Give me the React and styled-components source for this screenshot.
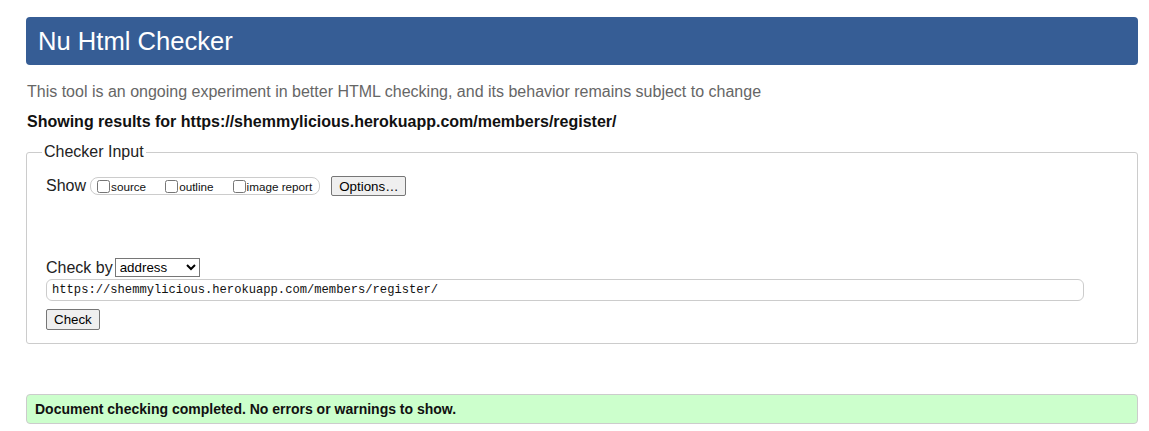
import styled, { createGlobalStyle } from 'styled-components';

const GlobalStyle = createGlobalStyle`
    body {
        margin: 0;
        background: #fff;
        font-family: "Liberation Sans", Arial, sans-serif;
        color: #111;
    }
`;

const Page = styled.div`
    width: 1112px;
    padding: 17px 0 0 26px;
`;

const Header = styled.h1`
    margin: 0;
    height: 48px;
    display: flex;
    align-items: center;
    padding: 0 12px;
    background: #365d95;
    border-radius: 4px;
    color: #fff;
    font-weight: normal;
    font-size: 25.6px;
`;

const Intro = styled.p`
    margin: 17px 0 0 1px;
    color: #666;
    font-size: 16px;
    line-height: 20px;
`;

const ResultFor = styled.p`
    margin: 10px 0 0 1px;
    font-size: 16px;
    line-height: 20px;
    font-weight: bold;
`;

const Fieldset = styled.fieldset`
    margin: 11px 0 0;
    padding: 0 19px 13px 19px;
    border: 1px solid #ccc;
    border-radius: 3px;
`;

const Legend = styled.legend`
    margin-left: -4px;
    padding: 0 2px;
    font-size: 16px;
    color: #222;
`;

const Row = styled.div`
    display: flex;
    align-items: center;
    margin-top: ${p => p.top || 0}px;
`;

const Label = styled.span`
    font-size: 16px;
    color: #222;
    margin-right: ${p => p.gap || 4}px;
`;

const Pill = styled.div`
    display: flex;
    align-items: center;
    height: 16px;
    padding: 0 7px 0 2px;
    border: 1px solid #ccc;
    border-radius: 8px;
`;

const CheckLabel = styled.label`
    display: flex;
    align-items: center;
    font-size: 11.7px;
    margin-right: ${p => p.last ? 0 : 15}px;

    input {
        width: 13px;
        height: 13px;
        margin: 0 1px 0 4px;
    }
`;

const Button = styled.button`
    height: ${p => p.h || 20}px;
    padding: 0 7px;
    margin-left: ${p => p.left || 0}px;
    font-family: "Liberation Sans", Arial, sans-serif;
    font-size: 13.33px;
    color: #000;
    background: #efefef;
    border: 1px solid #767676;
    border-radius: 2px;
`;

const Select = styled.select`
    width: 85px;
    height: 19px;
    font-family: "Liberation Sans", Arial, sans-serif;
    font-size: 13.33px;
    color: #000;
    background: #fff;
    border: 1px solid #767676;
    border-radius: 0;
`;

const UrlInput = styled.input`
    box-sizing: border-box;
    width: 1038px;
    height: 22px;
    margin-top: 2px;
    padding: 0 5px;
    border: 1px solid #ccc;
    border-radius: 6px;
    font-family: "Liberation Mono", "DejaVu Sans Mono", monospace;
    font-size: 12.15px;
    color: #111;
    outline: none;
`;

const Success = styled.div`
    margin-top: 50px;
    height: 28px;
    display: flex;
    align-items: center;
    padding: 0 8px;
    background: #ccffcc;
    border: 1px solid #ccc;
    border-radius: 4px;
    font-size: 14px;
    font-weight: bold;
    color: #111;
`;

const options = ['source', 'outline', 'image report'];

const App = () => {
  return (
    <Page>
        <GlobalStyle />
        <Header>Nu Html Checker</Header>
        <Intro>This tool is an ongoing experiment in better HTML checking, and its behavior remains subject to change</Intro>
        <ResultFor>Showing results for https://shemmylicious.herokuapp.com/members/register/</ResultFor>
        <Fieldset>
            <Legend>Checker Input</Legend>
            <Row top={15}>
                <Label>Show</Label>
                <Pill>
                    {options.map((o, i) => (
                        <CheckLabel key={o} last={i === options.length - 1}>
                            <input type="checkbox" />{o}
                        </CheckLabel>
                    ))}
                </Pill>
                <Button left={11}>Options…</Button>
            </Row>
            <Row top={62}>
                <Label gap={2}>Check by</Label>
                <Select defaultValue="address">
                    <option value="address">address</option>
                    <option value="upload">file upload</option>
                    <option value="text">text input</option>
                </Select>
            </Row>
            <UrlInput defaultValue="https://shemmylicious.herokuapp.com/members/register/" />
            <Row top={8}>
                <Button h={21}>Check</Button>
            </Row>
        </Fieldset>
        <Success>Document checking completed. No errors or warnings to show.</Success>
    </Page>
  )
}

export default App
